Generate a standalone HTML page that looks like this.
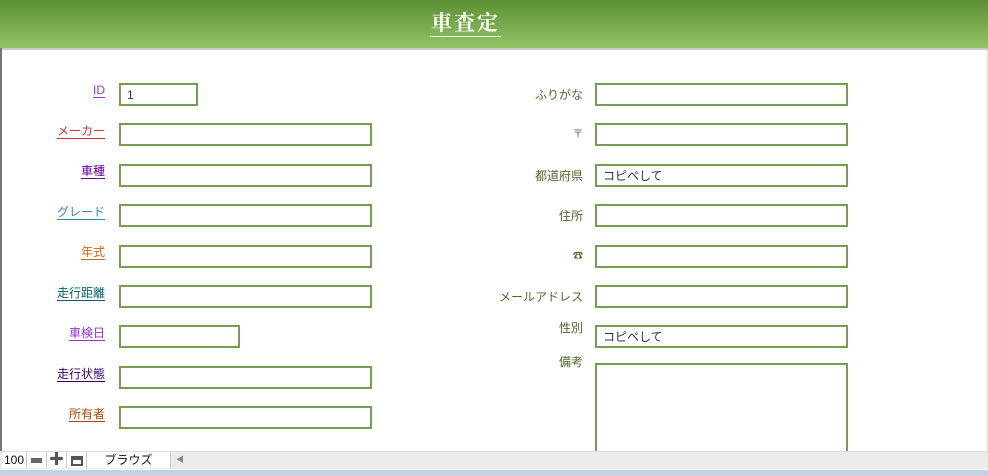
<!DOCTYPE html>
<html><head><meta charset="utf-8"><style>
*{margin:0;padding:0;box-sizing:border-box}
body{width:988px;height:475px;overflow:hidden;background:#fff;position:relative;font-family:"Liberation Sans","Noto Sans CJK JP",sans-serif;font-size:12px}
#hdr{position:absolute;left:0;top:0;width:988px;height:48px;background:linear-gradient(#5c8f33,#93c567)}
#hbar{position:absolute;left:0;top:48px;width:988px;height:2px;background:#c8cfc2}
#title{position:absolute;left:430px;top:9px;width:71px;text-align:center;color:#fff;font-family:"Noto Serif CJK SC","Liberation Serif",serif;font-size:21px;font-weight:bold;letter-spacing:2px;line-height:27px;border-bottom:1.5px solid #fff}
#lb{position:absolute;left:0;top:48px;width:2px;height:403px;background:#777}
#rb{position:absolute;left:986px;top:50px;width:2px;height:401px;background:#eee}
.in{position:absolute;height:23px;border:2px solid #759f50;background:#fff;padding:3px 0 0 6px;font-size:12px;color:#333;line-height:14px}
.l{position:absolute;right:0;text-align:right;font-size:12px;text-decoration:underline;text-underline-offset:3px;line-height:14px}
.L{position:absolute;width:105px;left:0}
.R{position:absolute;width:583px;left:0;color:#4a6a2a;text-align:right;line-height:14px}
#bot{position:absolute;left:0;top:451px;width:988px;height:18px;background:#ebebeb;border-top:1px solid #ddd}
#blue{position:absolute;left:0;top:469px;width:988px;height:6px;background:#bcd3ea;border-top:1px solid #fff}
.bc{position:absolute;top:452px;height:16px;background:#fff;border-right:1px solid #ccc;font-size:12px;line-height:16px;text-align:center;color:#111}
</style></head><body>
<div id="hdr"></div><div id="hbar"></div>
<div id="title">車査定</div>
<div id="lb"></div><div id="rb"></div>

<div class="L" style="top:83px"><span class="l" style="color:#9933cc">ID</span></div>
<div class="L" style="top:124px"><span class="l" style="color:#cc3333">メーカー</span></div>
<div class="L" style="top:164px"><span class="l" style="color:#660099">車種</span></div>
<div class="L" style="top:205px"><span class="l" style="color:#3388aa">グレード</span></div>
<div class="L" style="top:245px"><span class="l" style="color:#cc6622">年式</span></div>
<div class="L" style="top:286px"><span class="l" style="color:#006070">走行距離</span></div>
<div class="L" style="top:326px"><span class="l" style="color:#9933cc">車検日</span></div>
<div class="L" style="top:367px"><span class="l" style="color:#330066">走行状態</span></div>
<div class="L" style="top:407px"><span class="l" style="color:#aa4400">所有者</span></div>

<div class="in" style="left:119px;top:83px;width:79px">1</div>
<div class="in" style="left:119px;top:123px;width:253px"></div>
<div class="in" style="left:119px;top:164px;width:253px"></div>
<div class="in" style="left:119px;top:204px;width:253px"></div>
<div class="in" style="left:119px;top:245px;width:253px"></div>
<div class="in" style="left:119px;top:285px;width:253px"></div>
<div class="in" style="left:119px;top:325px;width:121px"></div>
<div class="in" style="left:119px;top:366px;width:253px"></div>
<div class="in" style="left:119px;top:406px;width:253px"></div>

<div class="R" style="top:88px">ふりがな</div>
<div class="R" style="top:128px;font-size:10px">〒</div>
<div class="R" style="top:169px">都道府県</div>
<div class="R" style="top:209px">住所</div>
<div class="R" style="top:250px;font-size:10px">☎</div>
<div class="R" style="top:290px">メールアドレス</div>
<div class="R" style="top:321px">性別</div>
<div class="R" style="top:355px">備考</div>

<div class="in" style="left:595px;top:83px;width:253px"></div>
<div class="in" style="left:595px;top:123px;width:253px"></div>
<div class="in" style="left:595px;top:164px;width:253px">コピペして</div>
<div class="in" style="left:595px;top:204px;width:253px"></div>
<div class="in" style="left:595px;top:245px;width:253px"></div>
<div class="in" style="left:595px;top:285px;width:253px"></div>
<div class="in" style="left:595px;top:325px;width:253px">コピペして</div>
<div class="in" style="left:595px;top:363px;width:253px;height:100px"></div>

<div id="bot"></div><div id="blue"></div>
<div class="bc" style="left:2px;width:25px;text-align:left;padding-left:2px">100</div>
<div class="bc" style="left:27px;width:20px"><span style="display:inline-block;width:11px;height:5px;background:#666;vertical-align:middle"></span></div>
<div class="bc" style="left:47px;width:20px;font-weight:bold;color:#555;font-size:15px">✚</div>
<div class="bc" style="left:67px;width:20px"><span style="display:inline-block;width:12px;height:10px;border:2px solid #555;border-top-width:4px;vertical-align:middle"></span></div>
<div class="bc" style="left:87px;width:84px">ブラウズ</div>
<div style="position:absolute;left:176px;top:454px;font-size:8px;color:#888">◀</div>
</body></html>
